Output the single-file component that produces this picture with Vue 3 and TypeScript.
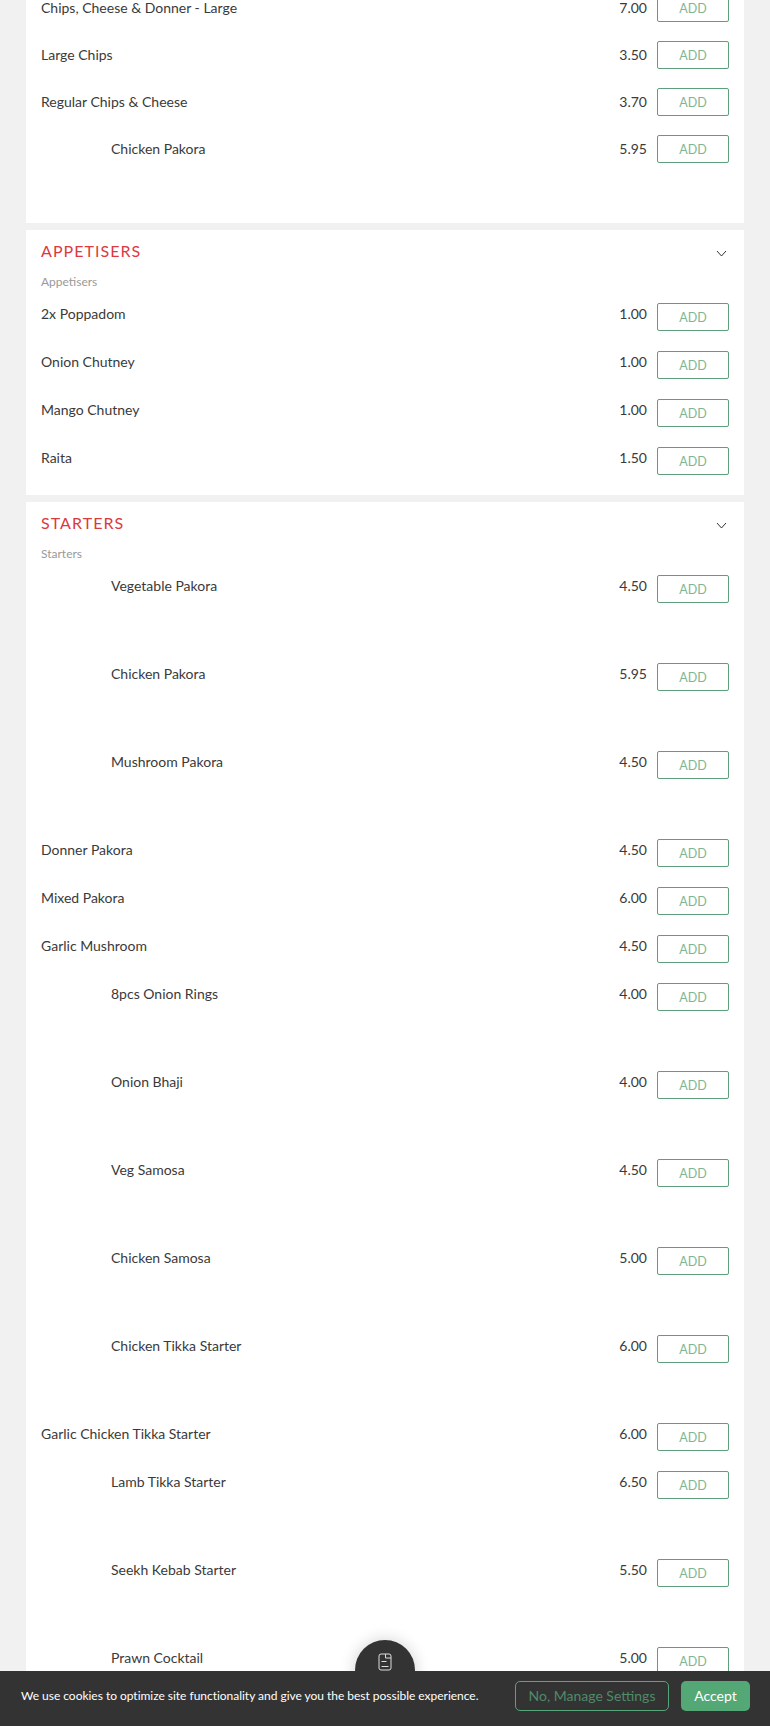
<script setup lang="ts">
interface Item { name: string; price: string; img?: boolean }
interface Section { title?: string; sub?: string; compact?: boolean; items: Item[] }

const sections: Section[] = [
  {
    compact: true,
    items: [
      { name: 'Chips, Cheese & Donner - Large', price: '7.00' },
      { name: 'Large Chips', price: '3.50' },
      { name: 'Regular Chips & Cheese', price: '3.70' },
      { name: 'Chicken Pakora', price: '5.95', img: true },
    ],
  },
  {
    title: 'APPETISERS',
    sub: 'Appetisers',
    items: [
      { name: '2x Poppadom', price: '1.00' },
      { name: 'Onion Chutney', price: '1.00' },
      { name: 'Mango Chutney', price: '1.00' },
      { name: 'Raita', price: '1.50' },
    ],
  },
  {
    title: 'STARTERS',
    sub: 'Starters',
    items: [
      { name: 'Vegetable Pakora', price: '4.50', img: true },
      { name: 'Chicken Pakora', price: '5.95', img: true },
      { name: 'Mushroom Pakora', price: '4.50', img: true },
      { name: 'Donner Pakora', price: '4.50' },
      { name: 'Mixed Pakora', price: '6.00' },
      { name: 'Garlic Mushroom', price: '4.50' },
      { name: '8pcs Onion Rings', price: '4.00', img: true },
      { name: 'Onion Bhaji', price: '4.00', img: true },
      { name: 'Veg Samosa', price: '4.50', img: true },
      { name: 'Chicken Samosa', price: '5.00', img: true },
      { name: 'Chicken Tikka Starter', price: '6.00', img: true },
      { name: 'Garlic Chicken Tikka Starter', price: '6.00' },
      { name: 'Lamb Tikka Starter', price: '6.50', img: true },
      { name: 'Seekh Kebab Starter', price: '5.50', img: true },
      { name: 'Prawn Cocktail', price: '5.00', img: true },
    ],
  },
]
</script>

<template>
  <div class="page">
    <main class="menu">
      <section v-for="(s, i) in sections" :key="i" class="card" :class="{ compact: s.compact }">
        <header v-if="s.title" class="head">
          <div class="title-row">
            <h2 class="title">{{ s.title }}</h2>
            <svg class="chev" width="11" height="7" viewBox="0 0 11 7" fill="none">
              <path d="M1 1l4.5 5L10 1" stroke="#333" stroke-width="1" />
            </svg>
          </div>
          <p class="sub">{{ s.sub }}</p>
        </header>
        <div v-for="item in s.items" :key="item.name" class="row" :class="{ tall: item.img }">
          <span v-if="item.img" class="thumb"></span>
          <span class="name">{{ item.name }}</span>
          <span class="price">{{ item.price }}</span>
          <button class="add" type="button">ADD</button>
        </div>
      </section>
    </main>

    <button class="fab" type="button" aria-label="Menu">
      <svg width="14" height="18" viewBox="0 0 14 18" fill="none" stroke="#ddd" stroke-width="1">
        <rect x="1" y="1" width="12" height="16" rx="2" />
        <path d="M7.5 1v4h5.5M3.5 8.5h5M3.5 13.5h7" />
      </svg>
    </button>

    <aside class="cookie">
      <p class="cookie-text">We use cookies to optimize site functionality and give you the best possible experience.</p>
      <button class="btn-outline" type="button">No, Manage Settings</button>
      <button class="btn-accept" type="button">Accept</button>
    </aside>
  </div>
</template>

<style>
html, body { margin: 0; padding: 0; background: #f1f1f1; overflow: hidden; }
</style>

<style scoped>
.page {
  position: relative;
  height: 1726px;
  overflow: hidden;
  background: #f1f1f1;
  font-family: Lato, "Liberation Sans", sans-serif;
  color: #3a3a3a;
}
.menu {
  display: flex;
  flex-direction: column;
  gap: 7px;
  margin: -6px 26px 0;
}
.card {
  background: #fff;
  padding: 0 15px;
}
.head { height: 73px; box-sizing: border-box; padding-top: 11px; }
.title-row { display: flex; align-items: center; justify-content: space-between; height: 20px; }
.title {
  margin: 0;
  font-size: 16px;
  font-weight: 400;
  line-height: 20px;
  letter-spacing: 1.05px;
  color: #db3a3f;
}
.chev { margin: 4px 2px 0 0; }
.sub {
  margin: 11px 0 0;
  font-size: 12px;
  line-height: 20px;
  color: #999;
}
.row {
  display: flex;
  align-items: flex-start;
  height: 48px;
  font-size: 14px;
  line-height: 21px;
}
.row.tall { height: 88px; }
.compact .row:not(.tall) { height: 47px; }
.compact .name, .compact .price { padding-top: 3px; }
.thumb { width: 60px; height: 68px; margin-right: 10px; flex: none; }
.name { flex: 1; min-width: 0; }
.price { margin-right: 10px; text-align: right; }
.add {
  width: 72px;
  height: 28px;
  flex: none;
  padding: 0;
  box-sizing: border-box;
  background: #fff;
  border: 1px solid #5f9e7d;
  border-radius: 2px;
  font-family: inherit;
  font-size: 12.5px;
  color: #7fb692;
}
.fab {
  position: absolute;
  left: 355px;
  top: 1640px;
  width: 60px;
  height: 60px;
  padding: 13px 0 0;
  box-sizing: border-box;
  display: flex;
  justify-content: center;
  align-items: flex-start;
  border: 0;
  border-radius: 50%;
  background: #333;
  box-shadow: 0 0 16px rgba(0, 0, 0, 0.18);
}
.cookie {
  position: absolute;
  left: 0;
  right: 0;
  bottom: 0;
  height: 55px;
  box-sizing: border-box;
  padding: 0 20px 5px 21px;
  display: flex;
  align-items: center;
  background: #333;
}
.cookie-text {
  flex: 1;
  margin: 0 0 1px;
  font-size: 12px;
  letter-spacing: -0.025px;
  color: #fff;
}
.btn-outline, .btn-accept {
  height: 30px;
  padding: 0 0 2px;
  box-sizing: border-box;
  border-radius: 5px;
  font-family: inherit;
  font-size: 14px;
}
.btn-outline {
  width: 154px;
  margin-right: 12px;
  background: transparent;
  border: 1px solid #55a678;
  color: #4e8b68;
}
.btn-accept {
  width: 69px;
  background: #53a875;
  border: 0;
  color: #fff;
}
</style>
